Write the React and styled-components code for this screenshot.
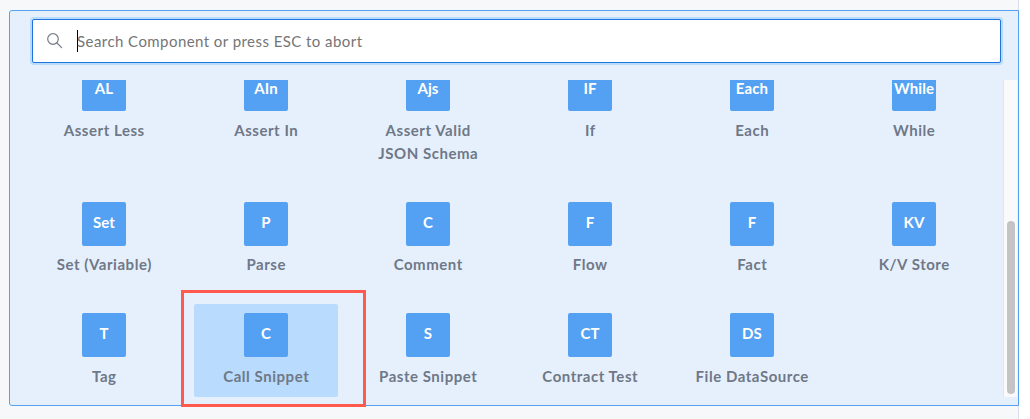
import React from "react";
import styled, { createGlobalStyle } from "styled-components";

const GlobalStyle = createGlobalStyle`
  * { box-sizing: border-box; }
  body {
    margin: 0;
    background: #fff;
    font-family: Lato, "Liberation Sans", sans-serif;
    overflow: hidden;
  }
`;

const Page = styled.div`
  position: relative;
  width: 1019px;
  height: 419px;
  padding: 10px 0 13px 9px;
  background: #f7f8fa;
  border-right: 1px solid #d8dfea;
`;

const Panel = styled.section`
  display: flex;
  flex-direction: column;
  width: 1010px;
  height: 396px;
  background: #e6f0fd;
  border: 1px solid #54a1f3;
  border-radius: 3px 0 0 3px;
`;

const SearchBox = styled.label`
  display: flex;
  align-items: center;
  flex: none;
  height: 44px;
  margin: 8px 17px 17px 22px;
  padding-left: 14px;
  background: #fff;
  border: 1px solid #1f74de;
  border-radius: 2px;
  box-shadow: 0 0 0 2px #b9dbfd;
`;

const SearchIcon = styled.svg`
  width: 16px;
  height: 16px;
  margin: -1px 14px 0 0;
  fill: none;
  stroke: #747c8b;
  stroke-width: 1.2;
  stroke-linecap: round;
`;

const Caret = styled.span`
  width: 1px;
  height: 22px;
  margin-right: -1px;
  background: #000;
`;

const Placeholder = styled.span`
  font-size: 15px;
  line-height: 22px;
  letter-spacing: 0.44px;
  color: #757575;
  white-space: nowrap;
`;

const ScrollArea = styled.div`
  display: flex;
  height: 317px;
  overflow: hidden;
`;

const Viewport = styled.div`
  display: flex;
  flex-direction: column;
  justify-content: flex-end;
  width: 993px;
  padding-left: 22px;
`;

const Grid = styled.div`
  display: grid;
  grid-template-columns: repeat(6, 144px);
  gap: 18px;
`;

const Item = styled.div`
  display: flex;
  flex-direction: column;
  align-items: center;
  padding: 9px 0;
  border-radius: 2px;
  background: ${(p) => (p.$selected ? "#b9dbfd" : "transparent")};
`;

const Tile = styled.div`
  display: flex;
  align-items: center;
  justify-content: center;
  width: 44px;
  height: 44px;
  margin-bottom: 7.8px;
  padding-bottom: 2.8px;
  border-radius: 2px;
  background: #54a1f3;
  color: #fff;
  font-size: 15px;
  font-weight: 700;
  line-height: 16px;
  letter-spacing: 0.1px;
`;

const Label = styled.div`
  height: ${(p) => 23.4 + (p.$lines - 1) * 23.2}px;
  padding-left: 0.5px;
  color: #6f7887;
  font-size: 15px;
  font-weight: 700;
  line-height: 23px;
  letter-spacing: 0.54px;
  text-align: center;
  white-space: pre;
`;

const Track = styled.div`
  width: 15px;
  padding: 141px 2px 3px 3px;
  background: #fafafa;
  border-left: 1px solid #e3e6ea;
  border-right: 1px solid #edeff1;
`;

const Thumb = styled.div`
  width: 8px;
  height: 173px;
  border-radius: 4px;
  background: #c4c4c4;
`;

const Highlight = styled.div`
  position: absolute;
  left: 181px;
  top: 290px;
  width: 185px;
  height: 117px;
  border: 3px solid #ff5a4d;
`;

const items = [
  ["AL", "Assert Less"],
  ["AIn", "Assert In"],
  ["Ajs", "Assert Valid\nJSON Schema"],
  ["IF", "If"],
  ["Each", "Each"],
  ["While", "While"],
  ["Set", "Set (Variable)"],
  ["P", "Parse"],
  ["C", "Comment"],
  ["F", "Flow"],
  ["F", "Fact"],
  ["KV", "K/V Store"],
  ["T", "Tag"],
  ["C", "Call Snippet"],
  ["S", "Paste Snippet"],
  ["CT", "Contract Test"],
  ["DS", "File DataSource"],
];

export default function App() {
  return (
    <>
      <GlobalStyle />
      <Page>
        <Panel>
          <SearchBox>
            <SearchIcon viewBox="0 0 16 16">
              <circle cx="6" cy="6" r="5.3" />
              <path d="M10 10L14.6 14.6" />
            </SearchIcon>
            <Caret />
            <Placeholder>Search Component or press ESC to abort</Placeholder>
          </SearchBox>
          <ScrollArea>
            <Viewport>
              <Grid>
                {items.map(([code, name]) => (
                  <Item key={name} $selected={name === "Call Snippet"}>
                    <Tile>{code}</Tile>
                    <Label $lines={name.split("\n").length}>{name}</Label>
                  </Item>
                ))}
              </Grid>
            </Viewport>
            <Track>
              <Thumb />
            </Track>
          </ScrollArea>
        </Panel>
        <Highlight />
      </Page>
    </>
  );
}
